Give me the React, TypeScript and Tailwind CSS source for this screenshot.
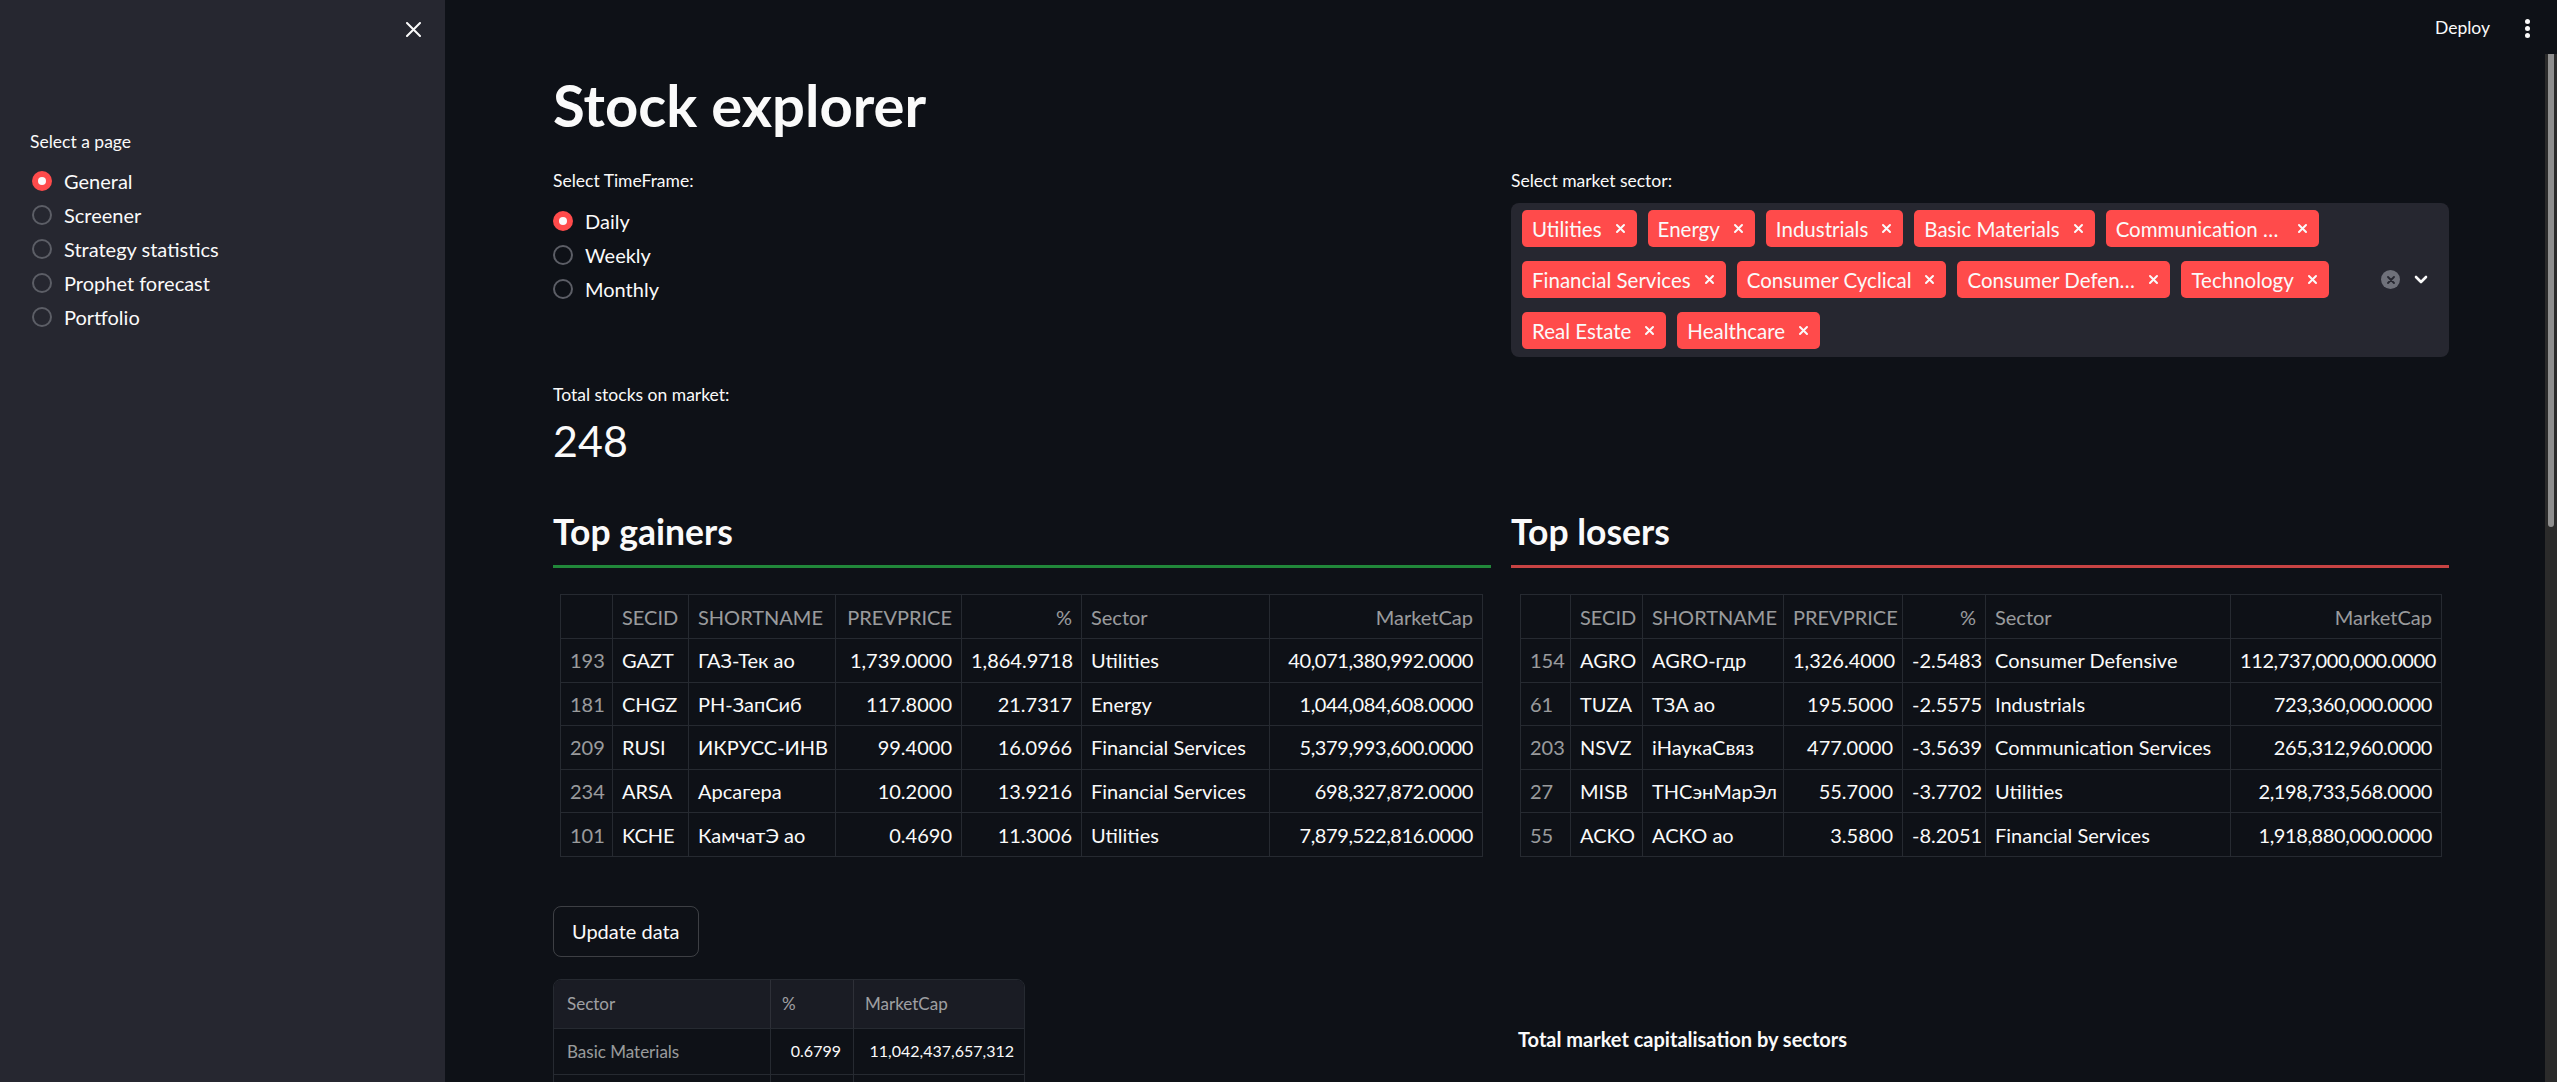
import React from "react";

type Row = [string, string, string, string, string, string, string];

const gainers: Row[] = [
  ["193", "GAZT", "ГАЗ-Тек ао", "1,739.0000", "1,864.9718", "Utilities", "40,071,380,992.0000"],
  ["181", "CHGZ", "РН-ЗапСиб", "117.8000", "21.7317", "Energy", "1,044,084,608.0000"],
  ["209", "RUSI", "ИКРУСС-ИНВ", "99.4000", "16.0966", "Financial Services", "5,379,993,600.0000"],
  ["234", "ARSA", "Арсагера", "10.2000", "13.9216", "Financial Services", "698,327,872.0000"],
  ["101", "KCHE", "КамчатЭ ао", "0.4690", "11.3006", "Utilities", "7,879,522,816.0000"],
];

const losers: Row[] = [
  ["154", "AGRO", "AGRO-гдр", "1,326.4000", "-2.5483", "Consumer Defensive", "112,737,000,000.0000"],
  ["61", "TUZA", "ТЗА ао", "195.5000", "-2.5575", "Industrials", "723,360,000.0000"],
  ["203", "NSVZ", "iНаукаСвяз", "477.0000", "-3.5639", "Communication Services", "265,312,960.0000"],
  ["27", "MISB", "ТНСэнМарЭл", "55.7000", "-3.7702", "Utilities", "2,198,733,568.0000"],
  ["55", "ACKO", "АСКО ао", "3.5800", "-8.2051", "Financial Services", "1,918,880,000.0000"],
];

const headers = ["", "SECID", "SHORTNAME", "PREVPRICE", "%", "Sector", "MarketCap"];
const aligns = ["text-left", "text-left", "text-left", "text-right", "text-right", "text-left", "text-right"];

const sectors = [
  "Utilities",
  "Energy",
  "Industrials",
  "Basic Materials",
  "Communication Services",
  "Financial Services",
  "Consumer Cyclical",
  "Consumer Defensive",
  "Technology",
  "Real Estate",
  "Healthcare",
];

function RadioDot({ checked }: { checked: boolean }) {
  return checked ? (
    <span className="flex h-[20px] w-[20px] shrink-0 items-center justify-center rounded-full bg-[#ff4b4b]">
      <span className="h-[8px] w-[8px] rounded-full bg-[#fafafa]" />
    </span>
  ) : (
    <span className="h-[20px] w-[20px] shrink-0 rounded-full border-2 border-[#5c5e66]" />
  );
}

function RadioRow({ label, checked }: { label: string; checked: boolean }) {
  return (
    <div className="flex h-[34px] items-center gap-[12px]">
      <RadioDot checked={checked} />
      <span className="text-[20px] leading-[24px] text-[#fafafa]">{label}</span>
    </div>
  );
}

function TagX() {
  return (
    <svg width="11" height="11" viewBox="0 0 11 11" className="shrink-0">
      <path d="M2 2 L9 9 M9 2 L2 9" stroke="#fafafa" strokeWidth="2" strokeLinecap="round" />
    </svg>
  );
}

function Tag({ label }: { label: string }) {
  return (
    <div className="flex h-[37px] items-center gap-[13px] rounded-[5px] bg-[#ff4b4b] pr-[11px] pl-[10px]">
      <span className="max-w-[168px] truncate text-[20.5px] leading-[24px] text-[#fafafa]">{label}</span>
      <TagX />
    </div>
  );
}

function StockTable({ rows, cols, width }: { rows: Row[]; cols: string[]; width: string }) {
  return (
    <table className={`table-fixed border-collapse text-[20px] ${width}`}>
      <colgroup>
        {cols.map((c, i) => (
          <col key={i} className={c} />
        ))}
      </colgroup>
      <thead>
        <tr className="h-[44px]">
          {headers.map((h, i) => (
            <th
              key={i}
              className={`border border-[#262a31] px-[9px] font-normal whitespace-nowrap text-[rgba(250,250,250,0.6)] ${aligns[i]}`}
            >
              {h}
            </th>
          ))}
        </tr>
      </thead>
      <tbody>
        {rows.map((r, ri) => (
          <tr key={ri} className="h-[43.6px]">
            {r.map((c, ci) => (
              <td
                key={ci}
                className={`overflow-hidden border border-[#262a31] px-[9px] whitespace-nowrap ${aligns[ci]} ${
                  ci === 0 ? "text-[rgba(250,250,250,0.6)]" : "text-[#fafafa]"
                } ${ci === 6 ? "tracking-[-0.4px]" : ""}`}
              >
                {c}
              </td>
            ))}
          </tr>
        ))}
      </tbody>
    </table>
  );
}

export default function App() {
  return (
    <div className="flex h-[1082px] w-[2557px] overflow-hidden bg-[#0e1117] text-[#fafafa] [font-family:Lato,'Noto_Sans',sans-serif]">
      {/* Sidebar */}
      <aside className="flex h-full w-[445px] shrink-0 flex-col bg-[#262730]">
        <div className="flex h-[58px] items-center justify-end pr-[24px]">
          <svg width="15" height="15" viewBox="0 0 15 15">
            <path d="M1 1 L14 14 M14 1 L1 14" stroke="#fafafa" strokeWidth="2" strokeLinecap="round" />
          </svg>
        </div>
        <div className="mt-[72px] px-[30px]">
          <div className="h-[24px] text-[17.5px] leading-[24px] text-[#fafafa]">Select a page</div>
          <div className="mt-[10px] flex flex-col pl-[2px]">
            <RadioRow label="General" checked />
            <RadioRow label="Screener" checked={false} />
            <RadioRow label="Strategy statistics" checked={false} />
            <RadioRow label="Prophet forecast" checked={false} />
            <RadioRow label="Portfolio" checked={false} />
          </div>
        </div>
      </aside>

      {/* Main */}
      <main className="flex min-w-0 flex-1">
        <div className="flex min-w-0 flex-1 flex-col">
          <header className="flex h-[56px] shrink-0 items-center justify-end gap-[35px] pr-[15px]">
            <span className="text-[17.5px] leading-[24px] text-[#fafafa]">Deploy</span>
            <div className="flex flex-col gap-[2px]">
              <span className="h-[5px] w-[5px] rounded-full bg-[#fafafa]" />
              <span className="h-[5px] w-[5px] rounded-full bg-[#fafafa]" />
              <span className="h-[5px] w-[5px] rounded-full bg-[#fafafa]" />
            </div>
          </header>

          <div className="pl-[108px]">
            <div className="w-[1896px]">
              <h1 className="mt-[13px] text-[58px] leading-[72px] font-bold text-[#fafafa]">Stock explorer</h1>

              {/* Controls */}
              <div className="mt-[28px] grid grid-cols-2 gap-x-[20px]">
                <div>
                  <div className="h-[24px] text-[17.5px] leading-[24px]">Select TimeFrame:</div>
                  <div className="mt-[11px] flex flex-col">
                    <RadioRow label="Daily" checked />
                    <RadioRow label="Weekly" checked={false} />
                    <RadioRow label="Monthly" checked={false} />
                  </div>
                </div>
                <div>
                  <div className="h-[24px] text-[17.5px] leading-[24px]">Select market sector:</div>
                  <div className="mt-[10px] flex min-h-[154px] rounded-[8px] bg-[#262730] pt-[7px] pb-[8px] pl-[11px]">
                    <div className="flex flex-1 flex-wrap content-start gap-x-[11px] gap-y-[14px]">
                      {sectors.map((s) => (
                        <Tag key={s} label={s} />
                      ))}
                    </div>
                    <div className="flex w-[78px] shrink-0 items-center gap-[14px] pl-[10px]">
                      <span className="flex h-[19px] w-[19px] items-center justify-center rounded-full bg-[#6f717a]">
                        <svg width="8" height="8" viewBox="0 0 8 8">
                          <path d="M1 1 L7 7 M7 1 L1 7" stroke="#262730" strokeWidth="1.8" strokeLinecap="round" />
                        </svg>
                      </span>
                      <svg width="14" height="9" viewBox="0 0 14 9">
                        <path d="M2 2 L7 7 L12 2" stroke="#fafafa" strokeWidth="2.6" fill="none" strokeLinecap="round" strokeLinejoin="round" />
                      </svg>
                    </div>
                  </div>
                </div>
              </div>

              {/* Metric */}
              <div className="mt-[26px]">
                <div className="h-[24px] text-[17.5px] leading-[24px]">Total stocks on market:</div>
                <div className="mt-[7px] text-[43px] leading-[54px] font-normal">248</div>
              </div>

              {/* Tables */}
              <div className="mt-[43px] grid grid-cols-2 gap-x-[20px]">
                <div>
                  <h3 className="text-[35.5px] leading-[41px] font-bold">Top gainers</h3>
                  <div className="mt-[13px] h-[3px] w-full bg-[#21883a]" />
                  <div className="mt-[26px] ml-[7px]">
                    <StockTable
                      rows={gainers}
                      width="w-[922px]"
                      cols={["w-[52px]", "w-[76px]", "w-[147px]", "w-[126px]", "w-[120px]", "w-[188px]", "w-[213px]"]}
                    />
                  </div>
                </div>
                <div>
                  <h3 className="text-[35.5px] leading-[41px] font-bold">Top losers</h3>
                  <div className="mt-[13px] h-[3px] w-full bg-[#c74343]" />
                  <div className="mt-[26px] ml-[9px]">
                    <StockTable
                      rows={losers}
                      width="w-[921px]"
                      cols={["w-[50px]", "w-[72px]", "w-[141px]", "w-[119px]", "w-[83px]", "w-[245px]", "w-[211px]"]}
                    />
                  </div>
                </div>
              </div>

              {/* Bottom */}
              <div className="mt-[49px] grid grid-cols-2 gap-x-[20px]">
                <div>
                  <button className="h-[51px] rounded-[8px] border border-[rgba(250,250,250,0.2)] px-[18px] text-[20px] leading-[24px] text-[#fafafa]">
                    Update data
                  </button>
                  <div className="mt-[22px] w-[472px] overflow-hidden rounded-t-[8px] border border-[#262a31] text-[17px]">
                    <div className="grid h-[48px] grid-cols-[217px_83px_172px] bg-[#1a1c24] text-[rgba(250,250,250,0.6)]">
                      <div className="flex items-center border-r border-[#2e3038] px-[13px]">Sector</div>
                      <div className="flex items-center border-r border-[#2e3038] px-[11px]">%</div>
                      <div className="flex items-center px-[11px]">MarketCap</div>
                    </div>
                    <div className="grid h-[46px] grid-cols-[217px_83px_172px] border-t border-[#262a31]">
                      <div className="flex items-center border-r border-[#262a31] px-[13px] text-[rgba(250,250,250,0.6)]">Basic Materials</div>
                      <div className="flex items-center justify-end border-r border-[#262a31] px-[12px] text-[16px]">0.6799</div>
                      <div className="flex items-center justify-end px-[12px] text-[16px]">11,042,437,657,312</div>
                    </div>
                    <div className="grid h-[46px] grid-cols-[217px_83px_172px] border-t border-[#262a31]">
                      <div className="border-r border-[#262a31]" />
                      <div className="border-r border-[#262a31]" />
                      <div />
                    </div>
                  </div>
                </div>
                <div className="pt-[121px] pl-[7px]">
                  <div className="text-[20px] leading-[24px] font-bold">Total market capitalisation by sectors</div>
                </div>
              </div>
            </div>
          </div>
        </div>

        {/* Scrollbar */}
        <div className="flex w-[12px] shrink-0 flex-col pt-[54px]">
          <div className="flex flex-1 justify-center bg-[#2b2b2b]">
            <div className="h-[473px] w-[6px] rounded-b-[3px] bg-[#8f8f8f]" />
          </div>
        </div>
      </main>
    </div>
  );
}
